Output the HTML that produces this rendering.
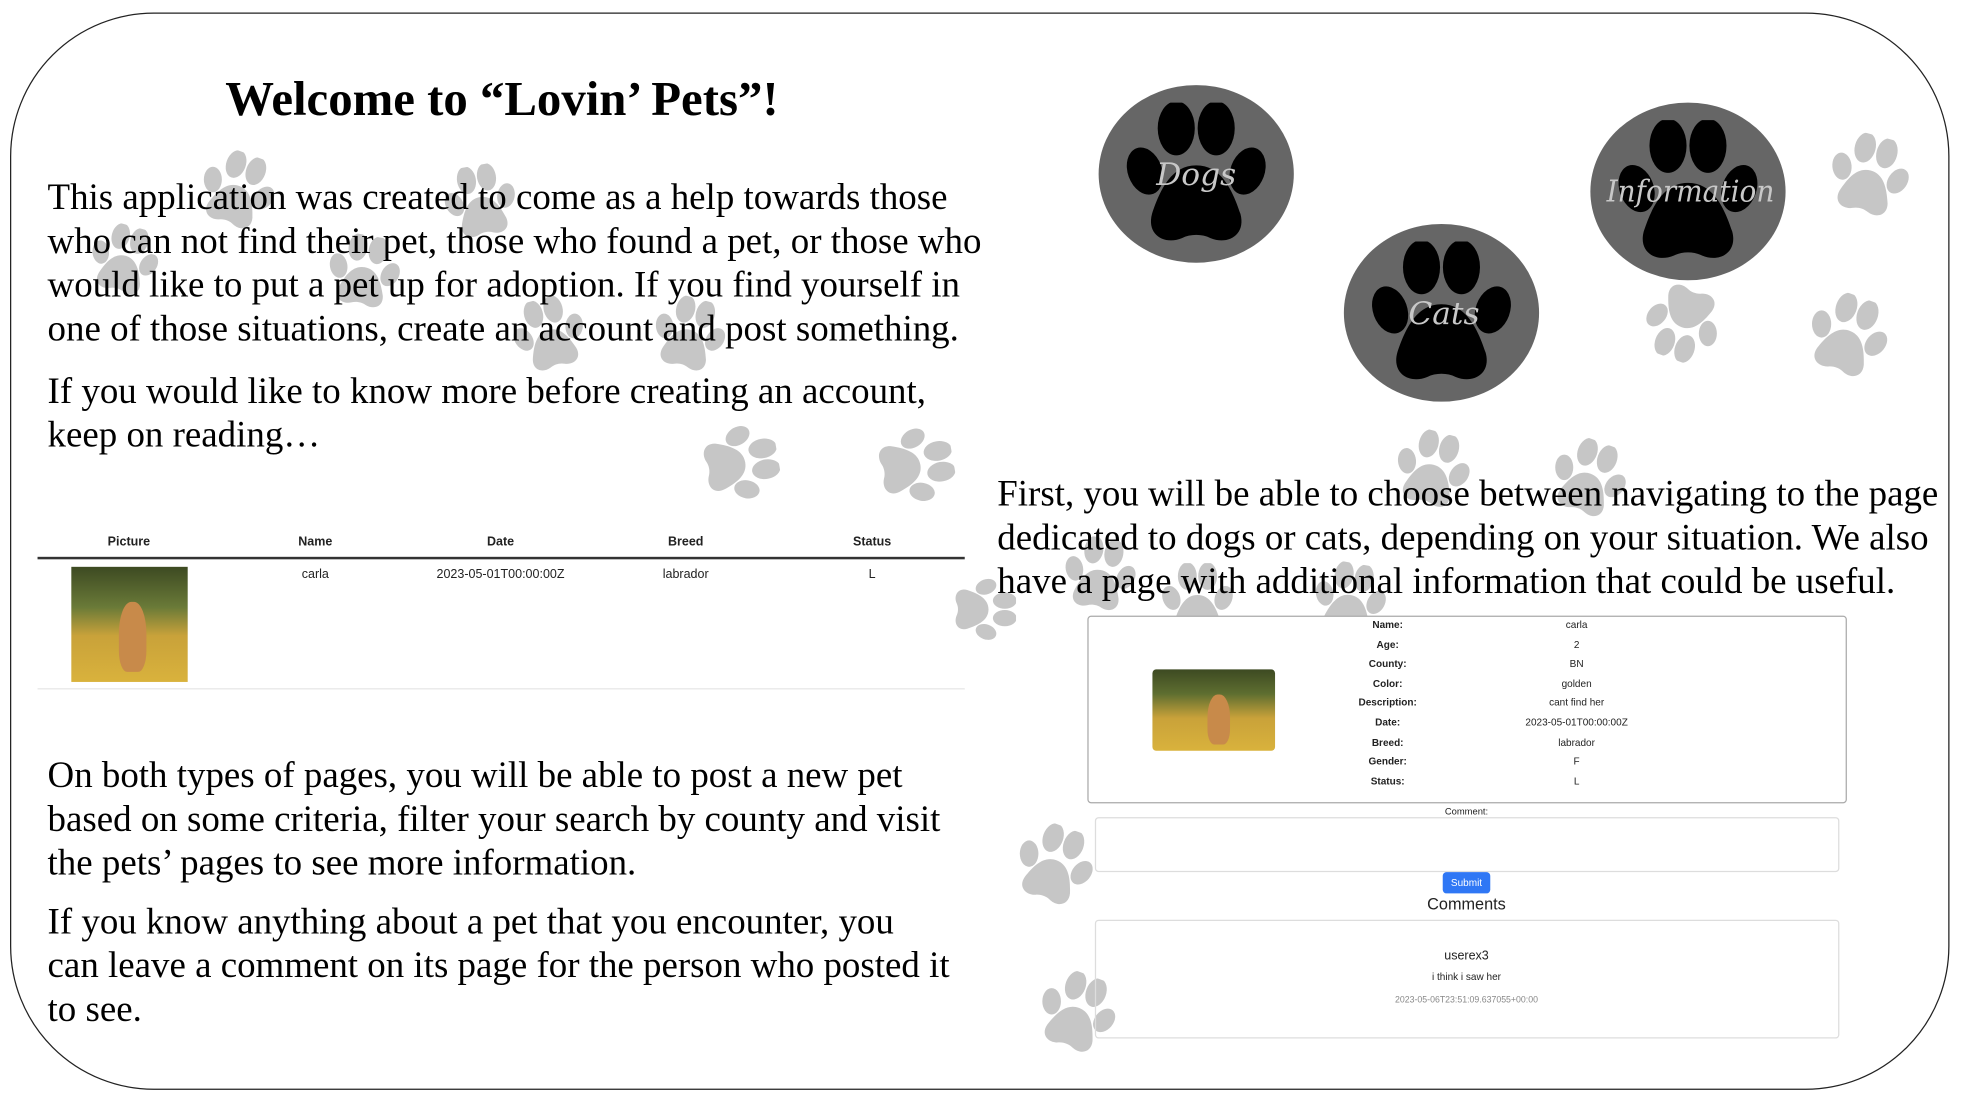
<!DOCTYPE html>
<html><head><meta charset="utf-8"><style>
html,body{margin:0;padding:0;background:#fff;width:1962px;height:1098px;overflow:hidden}
#w{position:absolute;left:0;top:0;width:1568px;height:877px;transform:scale(1.25128);transform-origin:0 0}
.a{position:absolute;white-space:nowrap}
.t{font-family:"Liberation Serif",serif;font-size:29.5px;line-height:35px;color:#000;left:38px}
.s{font-family:"Liberation Sans",sans-serif;color:#222}
svg.p{position:absolute;overflow:visible}
</style></head><body><div id="w">
<svg width="0" height="0" style="position:absolute"><defs><symbol id="paw" viewBox="0 0 100 100"><ellipse cx="14" cy="48" rx="12" ry="17" transform="rotate(-20 14 48)"/><ellipse cx="36" cy="18" rx="13" ry="19"/><ellipse cx="64" cy="18" rx="13" ry="19"/><ellipse cx="86" cy="48" rx="12" ry="17" transform="rotate(20 86 48)"/><path d="M50 44C33 44 25 60 19 78C15 93 28 100 40 95C46 92 54 92 60 95C72 100 85 93 81 78C75 60 67 44 50 44Z"/></symbol></defs></svg>
<svg class="p" style="left:160px;top:122px;fill:#c6c6c6" width="60" height="60"><use href="#paw" transform="rotate(20 30 30)" width="60" height="60"/></svg>
<svg class="p" style="left:355px;top:132px;fill:#c6c6c6" width="58" height="58"><use href="#paw" transform="rotate(-10 29 29)" width="58" height="58"/></svg>
<svg class="p" style="left:72px;top:180px;fill:#c6c6c6" width="55" height="55"><use href="#paw" transform="rotate(15 27 27)" width="55" height="55"/></svg>
<svg class="p" style="left:262px;top:188px;fill:#c6c6c6" width="58" height="58"><use href="#paw" transform="rotate(10 29 29)" width="58" height="58"/></svg>
<svg class="p" style="left:410px;top:238px;fill:#c6c6c6" width="58" height="58"><use href="#paw" transform="rotate(-15 29 29)" width="58" height="58"/></svg>
<svg class="p" style="left:522px;top:238px;fill:#c6c6c6" width="58" height="58"><use href="#paw" transform="rotate(15 29 29)" width="58" height="58"/></svg>
<svg class="p" style="left:562px;top:340px;fill:#c6c6c6" width="60" height="60"><use href="#paw" transform="rotate(80 30 30)" width="60" height="60"/></svg>
<svg class="p" style="left:702px;top:342px;fill:#c6c6c6" width="60" height="60"><use href="#paw" transform="rotate(80 30 30)" width="60" height="60"/></svg>
<svg class="p" style="left:1462px;top:108px;fill:#c6c6c6" width="64" height="64"><use href="#paw" transform="rotate(15 32 32)" width="64" height="64"/></svg>
<svg class="p" style="left:1315px;top:228px;fill:#c6c6c6" width="60" height="60"><use href="#paw" transform="rotate(200 30 30)" width="60" height="60"/></svg>
<svg class="p" style="left:1445px;top:236px;fill:#c6c6c6" width="64" height="64"><use href="#paw" transform="rotate(20 32 32)" width="64" height="64"/></svg>
<svg class="p" style="left:1115px;top:345px;fill:#c6c6c6" width="60" height="60"><use href="#paw" transform="rotate(15 30 30)" width="60" height="60"/></svg>
<svg class="p" style="left:1240px;top:352px;fill:#c6c6c6" width="60" height="60"><use href="#paw" transform="rotate(20 30 30)" width="60" height="60"/></svg>
<svg class="p" style="left:850px;top:430px;fill:#c6c6c6" width="58" height="58"><use href="#paw" transform="rotate(10 29 29)" width="58" height="58"/></svg>
<svg class="p" style="left:928px;top:450px;fill:#c6c6c6" width="58" height="58"><use href="#paw" transform="rotate(0 29 29)" width="58" height="58"/></svg>
<svg class="p" style="left:1050px;top:450px;fill:#c6c6c6" width="58" height="58"><use href="#paw" transform="rotate(10 29 29)" width="58" height="58"/></svg>
<svg class="p" style="left:762px;top:462px;fill:#c6c6c6" width="50" height="50"><use href="#paw" transform="rotate(90 25 25)" width="50" height="50"/></svg>
<svg class="p" style="left:812px;top:660px;fill:#c6c6c6" width="62" height="62"><use href="#paw" transform="rotate(20 31 31)" width="62" height="62"/></svg>
<svg class="p" style="left:830px;top:778px;fill:#c6c6c6" width="62" height="62"><use href="#paw" transform="rotate(20 31 31)" width="62" height="62"/></svg>

<div class="a" style="left:8px;top:10px;width:1548px;height:859px;border:1.5px solid #222;border-radius:115px"></div>

<div class="a" style="left:180px;top:57px;font:bold 39px 'Liberation Serif',serif">Welcome to “Lovin’ Pets”!</div>
<div class="a t" style="top:141px">This application was created to come as a help towards those<br>who can not find their pet, those who found a pet, or those who<br>would like to put a pet up for adoption. If you find yourself in<br>one of those situations, create an account and post something.</div>
<div class="a t" style="top:296px">If you would like to know more before creating an account,<br>keep on reading…</div>

<div class="a s" style="left:30px;top:428px;width:741px;height:17px;border-bottom:2px solid #333"></div>
<div class="a s" style="left:53px;top:428px;width:100px;text-align:center;font-size:10px;font-weight:bold">Picture</div>
<div class="a s" style="left:202px;top:428px;width:100px;text-align:center;font-size:10px;font-weight:bold">Name</div>
<div class="a s" style="left:350px;top:428px;width:100px;text-align:center;font-size:10px;font-weight:bold">Date</div>
<div class="a s" style="left:498px;top:428px;width:100px;text-align:center;font-size:10px;font-weight:bold">Breed</div>
<div class="a s" style="left:647px;top:428px;width:100px;text-align:center;font-size:10px;font-weight:bold">Status</div>
<div class="a s" style="left:202px;top:454px;width:100px;text-align:center;font-size:10px">carla</div>
<div class="a s" style="left:340px;top:454px;width:120px;text-align:center;font-size:10px">2023-05-01T00:00:00Z</div>
<div class="a s" style="left:498px;top:454px;width:100px;text-align:center;font-size:10px">labrador</div>
<div class="a s" style="left:647px;top:454px;width:100px;text-align:center;font-size:10px">L</div>
<div class="a" style="left:30px;top:550px;width:741px;border-top:1px solid #e6e6e6"></div>
<div class="a" style="left:57px;top:453px;width:93px;height:92px;background:linear-gradient(180deg,#3d4a22 0%,#6a7a38 35%,#c9a23a 60%,#d9b23c 100%)"><div style="position:absolute;left:38px;top:28px;width:22px;height:56px;border-radius:45% 45% 30% 30%;background:#c88a4a"></div></div>

<div class="a t" style="top:603px">On both types of pages, you will be able to post a new pet<br>based on some criteria, filter your search by county and visit<br>the pets’ pages to see more information.</div>
<div class="a t" style="top:720px">If you know anything about a pet that you encounter, you<br>can leave a comment on its page for the person who posted it<br>to see.</div>

<svg class="p" style="left:878px;top:68px" width="156" height="142"><ellipse cx="78" cy="71" rx="78" ry="71" fill="#666"/><use href="#paw" x="20" y="14" width="116" height="114" fill="#000"/><text x="78" y="80" text-anchor="middle" font-family="DejaVu Serif,serif" font-style="italic" font-size="25" fill="#c8c8c8">Dogs</text></svg>
<svg class="p" style="left:1074px;top:179px" width="156" height="142"><ellipse cx="78" cy="71" rx="78" ry="71" fill="#666"/><use href="#paw" x="20" y="14" width="116" height="114" fill="#000"/><text x="80" y="80" text-anchor="middle" font-family="DejaVu Serif,serif" font-style="italic" font-size="25" fill="#c8c8c8">Cats</text></svg>
<svg class="p" style="left:1271px;top:82px" width="156" height="142"><ellipse cx="78" cy="71" rx="78" ry="71" fill="#666"/><use href="#paw" x="20" y="14" width="116" height="114" fill="#000"/><text x="80" y="79" text-anchor="middle" font-family="DejaVu Serif,serif" font-style="italic" font-size="24" fill="#c8c8c8" textLength="134" lengthAdjust="spacingAndGlyphs">Information</text></svg>

<div class="a t" style="left:797px;top:378px">First, you will be able to choose between navigating to the page<br>dedicated to dogs or cats, depending on your situation. We also<br>have a page with additional information that could be useful.</div>

<div class="a" style="left:869px;top:492px;width:605px;height:148px;border:1px solid #aaa;border-radius:3px;background:#fff"></div>
<div class="a" style="left:921px;top:535px;width:98px;height:65px;border-radius:3px;overflow:hidden;background:linear-gradient(180deg,#3d4a22 0%,#5e6e30 30%,#c9a23a 60%,#d9b23c 100%)"><div style="position:absolute;left:44px;top:20px;width:18px;height:40px;border-radius:45% 45% 30% 30%;background:#c88a4a"></div></div>
<div class="a s" style="left:1059px;top:492px;width:100px;text-align:center;font-size:8px;font-weight:bold;line-height:15.6px">Name:<br>Age:<br>County:<br>Color:<br>Description:<br>Date:<br>Breed:<br>Gender:<br>Status:</div>
<div class="a s" style="left:1200px;top:492px;width:120px;text-align:center;font-size:8px;line-height:15.6px">carla<br>2<br>BN<br>golden<br>cant find her<br>2023-05-01T00:00:00Z<br>labrador<br>F<br>L</div>
<div class="a s" style="left:1122px;top:644px;width:100px;text-align:center;font-size:7.5px">Comment:</div>
<div class="a" style="left:875px;top:653px;width:593px;height:42px;border:1px solid #ddd;border-radius:3px"></div>
<div class="a s" style="left:1153px;top:697px;width:38px;height:17px;background:#2f77f5;border-radius:3px;color:#fff;font-size:8px;line-height:17px;text-align:center">Submit</div>
<div class="a s" style="left:1122px;top:715px;width:100px;text-align:center;font-size:13px">Comments</div>
<div class="a" style="left:875px;top:735px;width:593px;height:93px;border:1px solid #ddd;border-radius:3px"></div>
<div class="a s" style="left:1122px;top:759px;width:100px;text-align:center;font-size:10px">userex3</div>
<div class="a s" style="left:1122px;top:776px;width:100px;text-align:center;font-size:8px">i think i saw her</div>
<div class="a s" style="left:1092px;top:796px;width:160px;text-align:center;font-size:7px;color:#888">2023-05-06T23:51:09.637055+00:00</div>
</div></body></html>
